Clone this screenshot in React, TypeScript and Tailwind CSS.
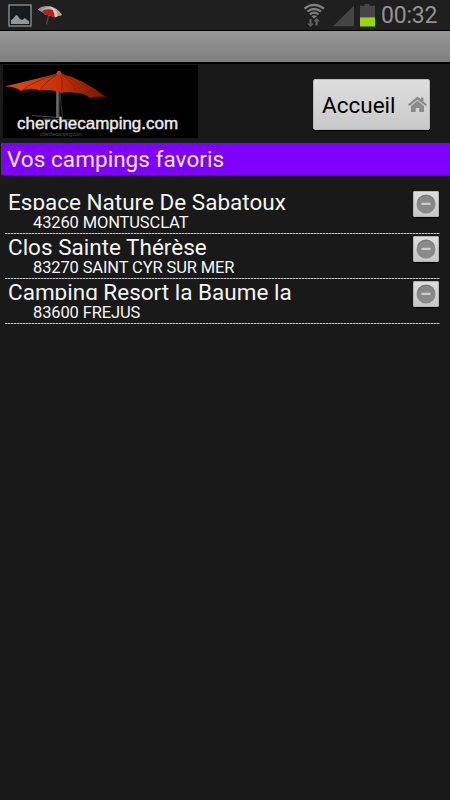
const campings = [
  { name: "Espace Nature De Sabatoux", city: "43260 MONTUSCLAT" },
  { name: "Clos Sainte Thérèse", city: "83270 SAINT CYR SUR MER" },
  { name: "Camping Resort la Baume la", city: "83600 FREJUS" },
]

function StatusBar() {
  return (
    <div className="flex h-[30px] items-start justify-between bg-[#1f1f1f] pl-2 pr-[13px]">
      <div className="flex gap-[5px] pt-1">
        <svg width="24" height="23" viewBox="0 0 24 23">
          <rect x="1" y="1" width="22" height="21" fill="#181b1c" stroke="#838688" strokeWidth="1.5" />
          <path d="M3 20v-4l2-1 2-3 2-1 3 4 2 1 3-2 2 2 2 1v3z" fill="#94979a" />
        </svg>
        <svg width="26" height="22" viewBox="0 0 26 22">
          <path d="M12 10 9.500 20.500" stroke="#60443a" strokeWidth="1.200" />
          <path d="M1 5.500C4 2 9 2 13 2.500c5 .5 9 4 12 8.500l-4 1-3 1.500-5-2-5-1-3-2.500z" fill="#b5b1ac" />
          <path d="M5 7.500C7 5 12 4.500 16 6l2 7.500-5-2-5-1z" fill="#bd1a1a" />
          <path d="M12 2.500c5 .5 8.500 4.500 8.500 9.700L18 13c0-4-2-8-6-10z" fill="#cfccc6" />
          <path d="M1 5.500c2-2.500 6-3.500 11-3C8 3.500 5 5 4 7.500z" fill="#948f8b" />
          <path d="m20 7 5 4-4 1z" fill="#bfa855" />
        </svg>
      </div>
      <div className="flex">
        <svg width="77" height="30" viewBox="0 0 77 30" className="mr-1">
          <g fill="none" stroke="#808080" strokeWidth="2.200">
            <path d="M4.500 8.700q9.500-7.500 19.500 0" />
            <path d="M7.500 11.500q6.500-5 13.500 0" />
            <path d="M10 14.300q4-3.200 8.500 0" />
          </g>
          <path d="M11.500 16.200q2.700-2 5.400 0l-2.700 2.300z" fill="#808080" />
          <path d="M9.500 19h2v4.500h2.300L10.500 27 7.200 23.500h2.300zM15.500 25.500h2.200v-4H20l-3.400-3.500-3.300 3.500h2.200z" fill="#626262" />
          <path d="M54 5.500v20.800H33z" fill="#444" />
          <path d="M60 5.700h4.500V4h5v1.700H75V17.300H60z" fill="#464646" />
          <path d="M60 17.300h15v9.200H60z" fill="#99d900" />
        </svg>
        <span className="w-[56px] whitespace-nowrap text-[23px] leading-[31px] tracking-[-0.2px] text-[#929292]">00:32</span>
      </div>
    </div>
  )
}

function Logo() {
  return (
    <svg width="195" height="73" viewBox="0 0 195 73" className="block bg-black">
      <defs>
        <linearGradient id="canopy" x1="0" x2="1">
          <stop offset="0" stopColor="#ea480c" />
          <stop offset=".55" stopColor="#c43006" />
          <stop offset="1" stopColor="#701600" />
        </linearGradient>
      </defs>
      <path d="M29 50.500 56 52.500M40 54l35 1" stroke="#4b4b4b" />
      <path d="M54.700 26v27" stroke="#6e6e6e" strokeWidth="3" />
      <path d="M56 27v27" stroke="#333" />
      <path d="m57 28 2.500 25" stroke="#3a3a3a" />
      <path d="M1.500 21.500 53 9q1-3 3-3 2 0 3 3 21 5 44 23-8-1-16 1-5-5-14-5-8-2-15 0-9-4-21-2.500Q27 22 18 26q-6-5-16.500-4.500z" fill="url(#canopy)" />
      <g fill="none" stroke="#8c2405">
        <path d="M54 9Q29 17 18 26" />
        <path d="M55 9Q40 18 37 26" />
        <path d="M57 9q4 9 1 19" />
        <path d="M58 9q14 9 15 19" />
        <path d="M59 9q19 8 28 24" />
      </g>
      <circle cx="56" cy="8" r="2.300" fill="#d93a0b" />
      <text x="14" y="64" textLength="161" lengthAdjust="spacingAndGlyphs" fill="#ececec" stroke="#ececec" strokeWidth=".4" fontFamily="Liberation Sans, sans-serif" fontSize="16.500">cherchecamping.com</text>
      <text x="37" y="71" textLength="42" fill="#505050" fontFamily="Liberation Sans, sans-serif" fontSize="5" fontStyle="italic">cherchecamping.com</text>
    </svg>
  )
}

function HomeIcon() {
  return (
    <svg width="19" height="17" viewBox="0 0 19 17" fill="#8b8b8b">
      <path d="M8.500 1.200q1-.8 2 0L13 3.200V1.500h2.500v4L19 8.500 17.700 10 9.500 3.700 1.300 10 0 8.500z" />
      <path d="m9.500 4.800 6.500 5.200v6h-4.700v-4H7.700v4H3v-6z" />
    </svg>
  )
}

function RemoveButton() {
  return (
    <button aria-label="Supprimer" className="mt-[2px] flex h-[26px] w-[26px] shrink-0 items-center justify-center rounded-[1px] border border-[#b5b5b5] bg-linear-to-b from-[#dedede] to-[#c6c6c6] shadow-[0_1px_1px_#000]">
      <svg width="20" height="20" viewBox="0 0 20 20">
        <circle cx="10" cy="10" r="9.500" fill="#898989" />
        <path d="M2 7a8.500 8.500 0 0 1 16 0" fill="none" stroke="#777" />
        <rect x="5.500" y="8.700" width="9" height="2.400" rx=".5" fill="#cecece" />
      </svg>
    </button>
  )
}

export default function App() {
  return (
    <div className="flex h-[800px] w-[450px] flex-col overflow-hidden bg-[#191919] font-['Roboto',sans-serif]">
      <StatusBar />
      <div className="h-[34px] border-t border-b-2 border-black bg-linear-to-b from-[#979797] to-[#7e7e7e]" />
      <header className="flex h-[79px] items-start justify-between pl-[3px] pr-5 pt-px">
        <Logo />
        <button className="mt-[14px] flex h-[51px] w-[117px] items-center justify-between rounded-[2px] border border-[#bbb] bg-linear-to-b from-[#dedede] to-[#c9c9c9] pl-2 pr-[2px] text-[22.5px] text-black shadow-[0_1px_1px_#000]">
          <span className="pt-[2px]">Accueil</span>
          <HomeIcon />
        </button>
      </header>
      <h1 className="ml-px h-[32px] bg-[#7f00ff] pl-[6px] text-[22.5px] leading-[32px] tracking-[0.05px] text-[#f3eaff]">Vos campings favoris</h1>
      <ul className="mt-[14px] ml-[5px] w-[435px]">
        {campings.map((c) => (
          <li key={c.name} className="h-[45px]">
            <div className="flex h-[44px] items-start justify-between pl-[3px] pr-px">
              <div className="whitespace-nowrap text-[#f4f4f4]">
                <div className="h-[21px] overflow-hidden text-[22.5px] leading-[26px]">{c.name}</div>
                <div className="pl-[25px] text-[16.5px] leading-[25px] tracking-[-0.13px]">{c.city}</div>
              </div>
              <RemoveButton />
            </div>
            <div className="h-px bg-[repeating-linear-gradient(90deg,#c4c4c4_0_2px,#747474_2px_3px)]" />
          </li>
        ))}
      </ul>
    </div>
  )
}
